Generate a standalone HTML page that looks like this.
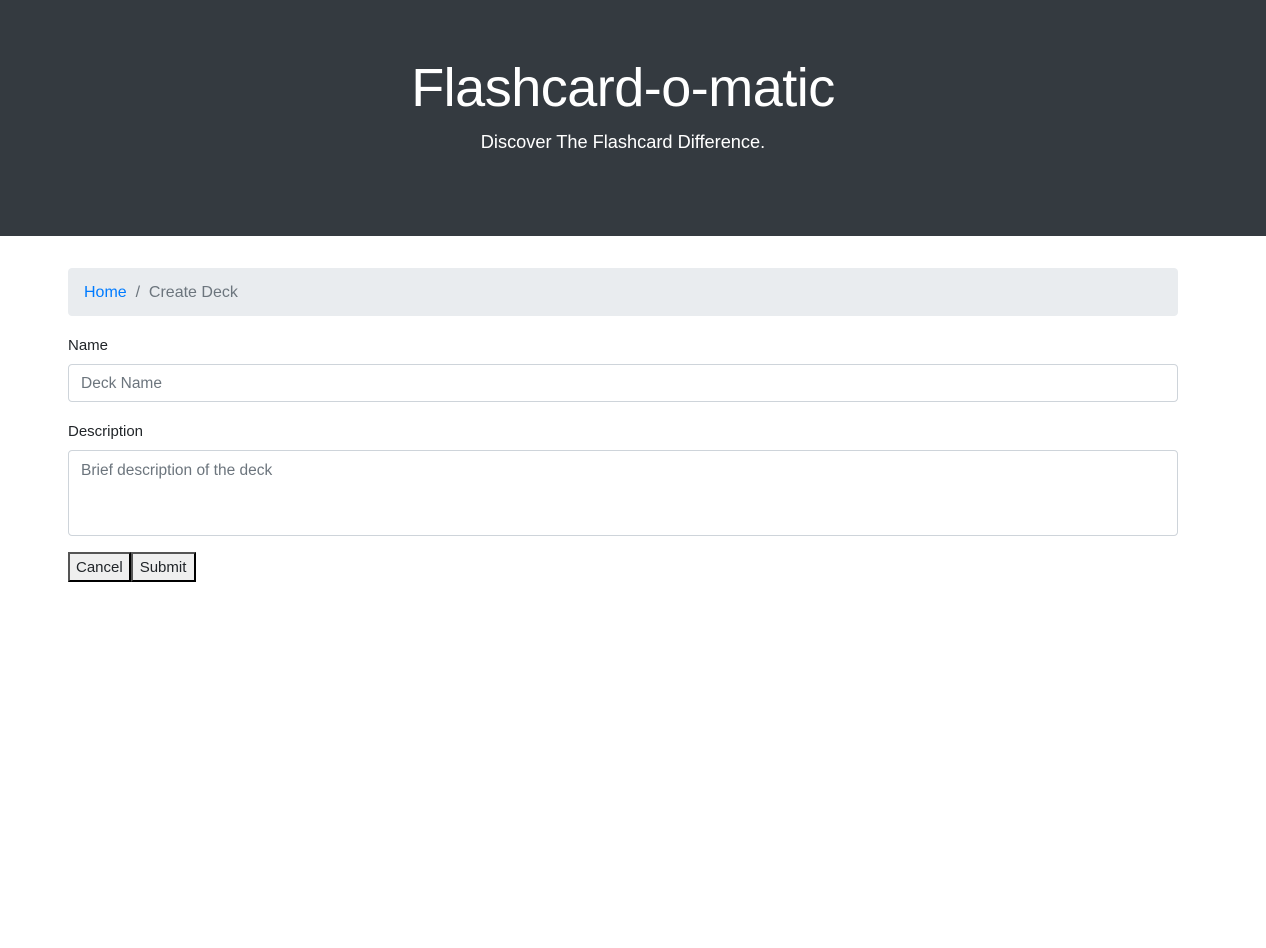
<!DOCTYPE html>
<html><head><style>
*{box-sizing:border-box}
body{margin:0;font-family:"Liberation Sans",sans-serif;color:#212529;background:#fff;font-size:16px}
.j{background:#343a40;height:236px;color:#fff;text-align:center;padding-top:55px;padding-right:20px}
.j h1{margin:0;font-weight:300;font-size:54px;line-height:66px;letter-spacing:-0.5px}
.j p{margin:11px 0 0;font-size:18.2px;font-weight:300}
.c{position:absolute;left:68px;width:1110px;top:268px}
.bc{background:#e9ecef;border-radius:4px;height:48px;padding:2px 16px 0;line-height:46px;color:#6c757d}
.bc a{color:#007bff;text-decoration:none}
label{display:block;margin-top:20px;line-height:20px;font-size:15px}
.in{border:1px solid #ced4da;border-radius:4px;margin-top:8px;height:38px;padding:2px 12px 0;line-height:34px;color:#6c757d;font-size:15.5px}
.ta{height:86px;line-height:22px;padding-top:9px}
.btns{margin-top:16px;display:flex}
.b{background:#efefef;border:2px outset #767676;border-color:#555 #222 #222 #555;height:30px;padding:2px 6px 0;font-size:15px;line-height:24px}
.b+.b{padding:2px 8px 0 7px}
</style></head><body>
<div class="j"><h1>Flashcard-o-matic</h1><p>Discover The Flashcard Difference.</p></div>
<div class="c">
<div class="bc"><a>Home</a>&nbsp; / &nbsp;Create Deck</div>
<label>Name</label>
<div class="in">Deck Name</div>
<label>Description</label>
<div class="in ta">Brief description of the deck</div>
<div class="btns"><div class="b">Cancel</div><div class="b">Submit</div></div>
</div>
</body></html>
